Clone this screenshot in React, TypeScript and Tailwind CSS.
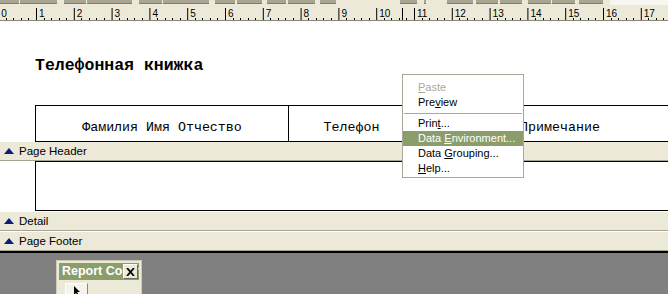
import React from "react";

const TOOLBAR_BITS: Array<[number, number]> = [
	[0, 19],
	[20, 57],
	[64, 86],
	[87, 132],
	[139, 162],
	[163, 209],
	[215, 235],
	[237, 262],
	[267, 286],
	[288, 315],
	[320, 336],
	[400, 417],
	[424, 426],
	[447, 473],
	[476, 498],
	[500, 522],
	[528, 551],
	[552, 575],
	[579, 603],
];

const CM = 37.8;

function Ruler() {
	const majors = Array.from({ length: 18 }, (_, n) => -1.8 + CM * n);
	return (
		<svg width={668} height={16} className="block bg-[#ece9d8]">
			{majors.map((x, n) => (
				<g key={n}>
					<line x1={x + 0.5} y1={3} x2={x + 0.5} y2={15} stroke="#000" strokeWidth={1} />
					{[1, 2, 3, 4].map((k) => (
						<line
							key={k}
							x1={Math.round(x + (CM / 5) * k) + 0.5}
							y1={13}
							x2={Math.round(x + (CM / 5) * k) + 0.5}
							y2={15}
							stroke="#000"
							strokeWidth={1}
						/>
					))}
					<text x={x + 3} y={12} fontSize={10} fontFamily="'Liberation Sans', Arial, sans-serif" fill="#000">
						{n}
					</text>
				</g>
			))}
			<line x1={402.5} y1={3} x2={402.5} y2={15} stroke="#000" strokeWidth={1} />
			<line x1={0} y1={15.5} x2={668} y2={15.5} stroke="#8a8778" strokeWidth={1} />
		</svg>
	);
}

function Band({ label }: { label: string }) {
	return (
		<div className="h-[19px] flex items-center bg-[#ece9d8] border-b border-[#a7a394] text-[11.5px] text-black">
			<svg width={10} height={6} className="ml-[4px] mr-[5px]">
				<polygon points="0,6 5,0 10,6" fill="#0a1f7a" />
			</svg>
			<span className="leading-none pt-[1px]">{label}</span>
		</div>
	);
}

function MenuItem({
	children,
	disabled,
	active,
}: {
	children: React.ReactNode;
	disabled?: boolean;
	active?: boolean;
}) {
	return (
		<div
			className={`h-[15px] flex items-center pl-[15px] text-[11px] leading-none ${
				active ? "bg-[#8c9d6c] text-white" : disabled ? "text-[#aca899]" : "text-black"
			}`}
		>
			<span className="whitespace-pre">{children}</span>
		</div>
	);
}

export default function App() {
	return (
		<div className="relative w-[668px] h-[294px] overflow-hidden bg-white font-['Liberation_Sans',Arial,sans-serif]">
			{/* toolbar remnants */}
			<div className="relative h-[5px] bg-[#ece9d8]">
				{TOOLBAR_BITS.map(([a, b]) => (
					<div
						key={a}
						className="absolute top-0 h-[4px] bg-[#a9a593] border-b border-[#7f7c6c]"
						style={{ left: a, width: b - a }}
					/>
				))}
				<div className="absolute top-0 left-[610px] right-0 h-[5px] bg-[#f7f6f0]" />
			</div>

			<Ruler />

			{/* report title */}
			<div className="h-[84px] pl-[35px] pt-[35px]">
				<div className="font-['Liberation_Mono','Courier_New',monospace] font-bold text-[16.5px] leading-[20px] text-black">
					Телефонная книжка
				</div>
			</div>

			{/* column headers */}
			<div className="ml-[35px] h-[37px] flex border-t border-b border-l border-black font-['Liberation_Mono','Courier_New',monospace] text-[13.3px] text-black w-[700px]">
				<div className="w-[253px] shrink-0 border-r border-black text-center pt-[12px]">Фамилия Имя Отчество</div>
				<div className="w-[126px] shrink-0 border-r border-black text-center pt-[12px]">Телефон</div>
				<div className="w-[290px] shrink-0 text-center pt-[12px]">Примечание</div>
			</div>

			<Band label="Page Header" />

			<div className="h-[51px] pl-[35px]">
				<div className="h-[50px] border-t border-b border-l border-black" />
			</div>

			<Band label="Detail" />
			<div className="h-[1px] bg-white" />
			<Band label="Page Footer" />
			<div className="h-[2px] bg-black" />

			<div className="h-[60px] bg-[#808080]" />

			{/* Report Controls floating window */}
			<div className="absolute left-[56px] top-[260px] w-[86px] h-[40px] bg-[#ece9d8] border border-[#cfcbb8] p-[2px]">
				<div className="h-[17px] bg-[#8c9d6c] flex items-center relative overflow-hidden">
					<span className="pl-[3px] text-white font-bold text-[12.5px] whitespace-nowrap leading-none">
						Report Controls
					</span>
					<div className="absolute right-[1px] top-[1px] w-[15px] h-[15px] bg-[#ece9d8] border border-[#fff] border-r-[#6f6c5e] border-b-[#6f6c5e] flex items-center justify-center">
						<svg width={9} height={8}>
							<path d="M1 0 L8 8 M8 0 L1 8" stroke="#000" strokeWidth={1.8} />
						</svg>
					</div>
				</div>
				<div className="mt-[3px] ml-[6px] w-[23px] h-[14px] bg-[#f4f3ec] border border-[#fff] border-r-[#8a8778] border-b-[#8a8778] flex justify-center pt-[2px]">
					<svg width={8} height={10}>
						<path d="M1 0 L1 9 L3 7 L5 10 L6 9 L4 6 L7 6 Z" fill="#000" />
					</svg>
				</div>
			</div>

			{/* context menu */}
			<div className="absolute left-[402px] top-[74px] w-[122px] h-[104px] bg-white border border-[#aca899] pt-[5px] font-['Liberation_Sans',Tahoma,sans-serif]">
				<MenuItem disabled>
					<u>P</u>aste
				</MenuItem>
				<MenuItem>
					Pre<u>v</u>iew
				</MenuItem>
				<div className="h-[6px] flex items-center px-[1px]">
					<div className="w-full h-[1px] bg-[#aca899]" />
				</div>
				<MenuItem>
					Prin<u>t</u>...
				</MenuItem>
				<MenuItem active>
					Data <u>E</u>nvironment...
				</MenuItem>
				<MenuItem>
					Data <u>G</u>rouping...
				</MenuItem>
				<MenuItem>
					<u>H</u>elp...
				</MenuItem>
			</div>
		</div>
	);
}
